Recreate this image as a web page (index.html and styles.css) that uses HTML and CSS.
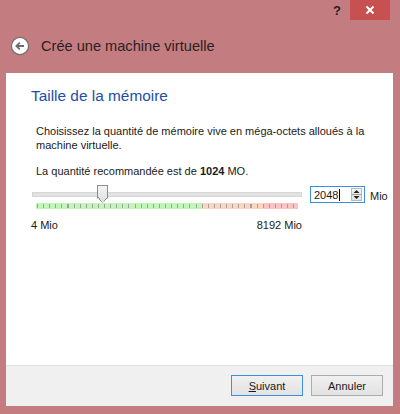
FILE: index.html
```html
<!DOCTYPE html>
<html lang="fr">
<head>
<meta charset="utf-8">
<title>Crée une machine virtuelle</title>
<link rel="stylesheet" href="styles.css">
</head>
<body>
<div class="window">
  <div class="titlebar">
    <span class="help">?</span>
    <span class="close">
      <svg width="10" height="10" viewBox="0 0 10 10"><path d="M1.5 1.5 L8.5 8.5 M8.5 1.5 L1.5 8.5" stroke="#fff" stroke-width="2"/></svg>
    </span>
  </div>
  <div class="header">
    <svg class="back" width="20" height="20" viewBox="0 0 20 20">
      <circle cx="10" cy="10" r="8.6" fill="#fff" stroke="#7a6f72" stroke-width="1.3"/>
      <path d="M14 10 H6.5 M9.8 6.6 L6.4 10 L9.8 13.4" fill="none" stroke="#6b6b70" stroke-width="1.8"/>
    </svg>
    <span class="title">Crée une machine virtuelle</span>
  </div>
  <div class="panel">
    <h1 class="heading">Taille de la mémoire</h1>
    <p class="desc">Choisissez la quantité de mémoire vive en méga-octets alloués à la machine virtuelle.</p>
    <p class="reco">La quantité recommandée est de <b>1024</b> MO.</p>
    <div class="slider-row">
      <div class="slider">
        <div class="groove">
          <span class="handle"></span>
        </div>
        <div class="scale"></div>
        <div class="limits"><span>4 Mio</span><span>8192 Mio</span></div>
      </div>
      <div class="spin">
        <span class="value">2048<span class="caret"></span></span>
        <span class="arrows">
          <svg width="9" height="13" viewBox="0 0 9 13"><path d="M1.5 5 L4.5 2 L7.5 5 Z M1.5 8 L4.5 11 L7.5 8 Z" fill="#222"/><path d="M0 6.5 H9" stroke="#9a9a9a" stroke-width="1"/></svg>
        </span>
      </div>
      <span class="unit">Mio</span>
    </div>
  </div>
  <div class="footer">
    <button class="btn default"><u>S</u>uivant</button>
    <button class="btn">Annuler</button>
  </div>
</div>
</body>
</html>
```

FILE: styles.css
```css
html, body {
  margin: 0;
  padding: 0;
}
body {
  background: #c37d80;
  font-family: "Liberation Sans", Arial, sans-serif;
  font-size: 11px;
  color: #1a1a1a;
  width: 400px;
  height: 414px;
  overflow: hidden;
}
.window {
  display: flex;
  flex-direction: column;
  padding: 0 7px 0 6px;
}
.titlebar {
  height: 20px;
  display: flex;
  justify-content: flex-end;
  align-items: stretch;
  margin-right: 3px;
}
.help {
  font-weight: bold;
  font-size: 13px;
  color: #2a2022;
  width: 16px;
  margin-right: 5px;
  line-height: 22px;
  text-align: center;
}
.close {
  width: 40px;
  background: #c75050;
  display: flex;
  align-items: center;
  justify-content: center;
}
.header {
  height: 53px;
  display: flex;
  align-items: center;
  padding-left: 4px;
  padding-bottom: 2px;
  box-sizing: border-box;
}
.back {
  display: block;
}
.title {
  font-size: 14.6px;
  color: #2b1f21;
  margin-left: 11px;
}
.panel {
  background: #fff;
  height: 292px;
  padding: 13px 0 0 25px;
  box-sizing: border-box;
}
.heading {
  margin: 0;
  font-weight: normal;
  font-size: 15.4px;
  color: #1c50a6;
  line-height: 20px;
}
.desc {
  margin: 18px 16px 0 5px;
  line-height: 14px;
}
.reco {
  margin: 12px 0 0 5px;
  line-height: 14px;
}
.reco b {
  font-weight: bold;
}
.slider-row {
  display: flex;
  align-items: flex-start;
  margin-top: 2px;
  margin-left: 1px;
}
.slider {
  width: 270px;
}
.groove {
  position: relative;
  height: 3px;
  margin-top: 12px;
  background: #e2e2e2;
  border: 1px solid #d6d6d6;
}
.handle {
  position: absolute;
  left: 64px;
  top: -8px;
  width: 11px;
  height: 18px;
  background: linear-gradient(#f4f4f4, #dedede);
  border: 1px solid #8f8f8f;
  border-bottom: none;
  clip-path: polygon(0 0, 100% 0, 100% 72%, 50% 100%, 0 72%);
  box-sizing: border-box;
}
.handle::after {
  content: "";
  position: absolute;
  left: 0;
  right: 0;
  bottom: 0;
  height: 6px;
  background: linear-gradient(to bottom right, transparent 45%, #8f8f8f 46%, #8f8f8f 56%, transparent 57%) right/50% 100% no-repeat,
              linear-gradient(to bottom left, transparent 45%, #8f8f8f 46%, #8f8f8f 56%, transparent 57%) left/50% 100% no-repeat;
}
.scale {
  height: 6px;
  margin: 6px 4px 0 4px;
  background:
    repeating-linear-gradient(to right, #a0a0a0 0 1px, transparent 1px 6.1px) 1px 1px / 100% 4px no-repeat,
    linear-gradient(to right, #c3f5b8 0 168px, #fcd4c0 168px 228px, #fbc3c3 228px);
}
.limits {
  display: flex;
  justify-content: space-between;
  margin-top: 10px;
  margin-left: -1px;
}
.spin {
  display: flex;
  align-items: center;
  justify-content: space-between;
  width: 53px;
  height: 15px;
  margin-left: 8px;
  margin-top: 6px;
  border: 1px solid #3d8ee0;
  box-sizing: content-box;
  background: #fff;
}
.value {
  padding-left: 3px;
  display: flex;
  align-items: center;
}
.caret {
  display: inline-block;
  width: 1px;
  height: 12px;
  background: #000;
  margin-left: 1px;
}
.arrows {
  width: 11px;
  height: 13px;
  margin-right: 2px;
  border: 1px solid #b9b9b9;
  background: linear-gradient(#f5f5f5, #e4e4e4);
  display: flex;
  align-items: center;
  justify-content: center;
  box-sizing: border-box;
}
.unit {
  margin-left: 5px;
  margin-top: 10px;
}
.footer {
  height: 41px;
  background: #f0f0f0;
  border-top: 1px solid #dfdfdf;
  display: flex;
  justify-content: flex-end;
  align-items: flex-start;
  padding: 9px 10px 0 0;
  gap: 8px;
  box-sizing: border-box;
}
.btn {
  font-family: inherit;
  font-size: 11px;
  color: #1a1a1a;
  width: 72px;
  height: 21px;
  padding: 0;
  background: linear-gradient(#f0f0f0, #e3e3e3);
  border: 1px solid #adadad;
  border-radius: 0;
}
.btn.default {
  border-color: #3c8fe0;
}
.btn u {
  text-decoration: underline;
}
```
